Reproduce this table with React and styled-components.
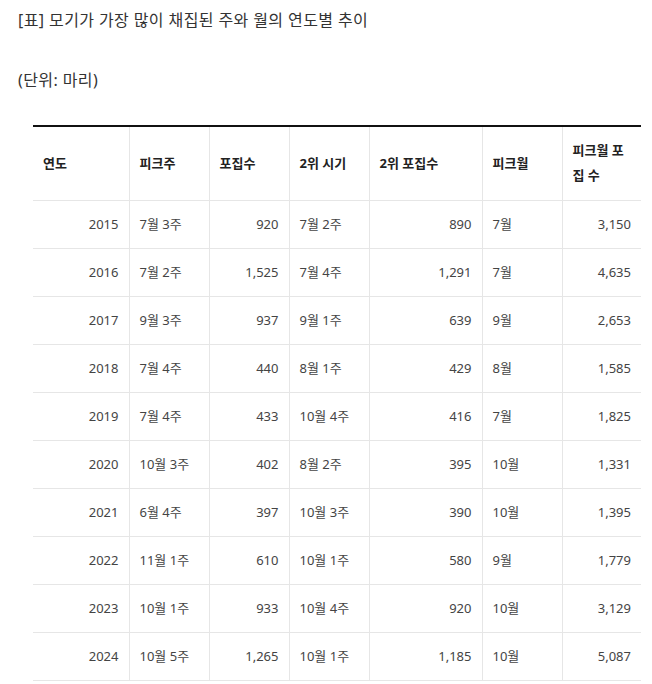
import React from 'react';
import styled, { createGlobalStyle } from 'styled-components';

const GlobalStyle = createGlobalStyle`
  body {
    margin: 0;
    background: #fff;
    font-family: "Noto Sans", "Noto Sans CJK KR", sans-serif;
  }
`

const Page = styled.div`
  padding: 8px 0 0 18px;
  color: #333;
`

const Caption = styled.p`
  margin: 0;
  font-size: 16px;
  letter-spacing: 0.4px;
  line-height: 24px;
  color: #333;
`

const Unit = styled.p`
  margin: 36px 0 0;
  font-size: 16px;
  letter-spacing: 0.4px;
  line-height: 24px;
  color: #333;
`

const Table = styled.table`
  margin: 33px 0 0 15px;
  width: 608px;
  table-layout: fixed;
  border-collapse: collapse;
  border-top: 2px solid #111;
  font-size: 13px;
`

const HeadCell = styled.th`
  padding: 11px 10px 12px;
  line-height: 25px;
  text-align: left;
  font-weight: 700;
  color: #222;
  vertical-align: middle;
  border-bottom: 1px solid #e6e6e6;
  border-left: 1px solid #e6e6e6;
  word-break: break-all;
  &:first-child {
    border-left: none;
  }
`

const Cell = styled.td`
  padding: 11px 10px;
  line-height: 25px;
  text-align: ${props => (props.num ? 'right' : 'left')};
  color: #444;
  border-bottom: 1px solid #e6e6e6;
  border-left: 1px solid #e6e6e6;
  white-space: nowrap;
  &:first-child {
    border-left: none;
  }
`

const columns = [
  { label: '연도', width: 96 },
  { label: '피크주', width: 80 },
  { label: '포집수', width: 80 },
  { label: '2위 시기', width: 80 },
  { label: '2위 포집수', width: 113 },
  { label: '피크월', width: 80 },
  { label: '피크월 포집 수', width: 79 },
];

const rows = [
  ['2015', '7월 3주', '920', '7월 2주', '890', '7월', '3,150'],
  ['2016', '7월 2주', '1,525', '7월 4주', '1,291', '7월', '4,635'],
  ['2017', '9월 3주', '937', '9월 1주', '639', '9월', '2,653'],
  ['2018', '7월 4주', '440', '8월 1주', '429', '8월', '1,585'],
  ['2019', '7월 4주', '433', '10월 4주', '416', '7월', '1,825'],
  ['2020', '10월 3주', '402', '8월 2주', '395', '10월', '1,331'],
  ['2021', '6월 4주', '397', '10월 3주', '390', '10월', '1,395'],
  ['2022', '11월 1주', '610', '10월 1주', '580', '9월', '1,779'],
  ['2023', '10월 1주', '933', '10월 4주', '920', '10월', '3,129'],
  ['2024', '10월 5주', '1,265', '10월 1주', '1,185', '10월', '5,087'],
];

const numericCols = [0, 2, 4, 6];

export default function App() {
  return (
    <Page>
      <GlobalStyle />
      <Caption>[표] 모기가 가장 많이 채집된 주와 월의 연도별 추이</Caption>
      <Unit>(단위: 마리)</Unit>
      <Table>
        <colgroup>
          {columns.map(col => (
            <col key={col.label} style={{ width: col.width }} />
          ))}
        </colgroup>
        <thead>
          <tr>
            {columns.map(col => (
              <HeadCell key={col.label}>{col.label}</HeadCell>
            ))}
          </tr>
        </thead>
        <tbody>
          {rows.map(row => (
            <tr key={row[0]}>
              {row.map((value, i) => (
                <Cell key={i} num={numericCols.includes(i)}>{value}</Cell>
              ))}
            </tr>
          ))}
        </tbody>
      </Table>
    </Page>
  );
}
